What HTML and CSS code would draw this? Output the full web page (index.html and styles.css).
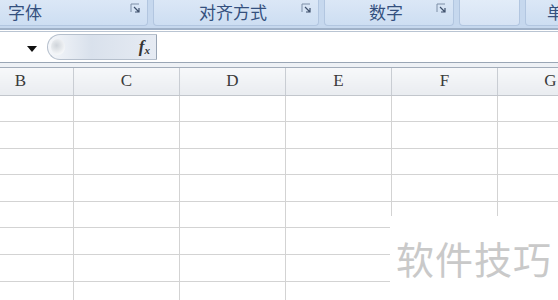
FILE: index.html
```html
<!DOCTYPE html>
<html lang="zh-CN">
<head>
    <meta charset="UTF-8">
    <meta name="viewport" content="width=device-width, initial-scale=1.0">
    <title>Excel</title>
    <link rel="stylesheet" href="styles.css">
</head>
<body>
    <div class="ribbon">
        <div class="group group-font">
            <span class="group-label">字体</span>
            <svg class="launcher" width="11" height="11" viewBox="0 0 11 11"><path d="M1 9V1h8" fill="none" stroke="#7d8ea6" stroke-width="1"/><path d="M4 4l5 5M9 5v4H5" fill="none" stroke="#3d4f6b" stroke-width="1.2"/></svg>
        </div>
        <div class="group group-align">
            <span class="group-label">对齐方式</span>
            <svg class="launcher" width="11" height="11" viewBox="0 0 11 11"><path d="M1 9V1h8" fill="none" stroke="#7d8ea6" stroke-width="1"/><path d="M4 4l5 5M9 5v4H5" fill="none" stroke="#3d4f6b" stroke-width="1.2"/></svg>
        </div>
        <div class="group group-number">
            <span class="group-label">数字</span>
            <svg class="launcher" width="11" height="11" viewBox="0 0 11 11"><path d="M1 9V1h8" fill="none" stroke="#7d8ea6" stroke-width="1"/><path d="M4 4l5 5M9 5v4H5" fill="none" stroke="#3d4f6b" stroke-width="1.2"/></svg>
        </div>
        <div class="group group-empty"></div>
        <div class="group group-cell">
            <span class="group-label">单</span>
        </div>
    </div>

    <div class="formula-bar">
        <div class="name-box">
            <svg width="10" height="6" viewBox="0 0 10 6"><path d="M0 0h10L5 6z" fill="#111"/></svg>
        </div>
        <div class="fx-button">
            <span class="knob"></span>
            <span class="fx">f<sub>x</sub></span>
        </div>
        <div class="formula-input"></div>
    </div>
    <div class="sheet-gap"></div>

    <table class="sheet">
        <colgroup>
            <col><col><col><col><col><col>
        </colgroup>
        <thead>
            <tr><th>B</th><th>C</th><th>D</th><th>E</th><th>F</th><th>G</th></tr>
        </thead>
        <tbody>
            <tr><td></td><td></td><td></td><td></td><td></td><td></td></tr>
            <tr><td></td><td></td><td></td><td></td><td></td><td></td></tr>
            <tr><td></td><td></td><td></td><td></td><td></td><td></td></tr>
            <tr><td></td><td></td><td></td><td></td><td></td><td></td></tr>
            <tr><td></td><td></td><td></td><td></td><td></td><td></td></tr>
            <tr><td></td><td></td><td></td><td></td><td></td><td></td></tr>
            <tr><td></td><td></td><td></td><td></td><td></td><td></td></tr>
            <tr><td></td><td></td><td></td><td></td><td></td><td></td></tr>
        </tbody>
    </table>

    <div class="watermark">软件技巧</div>
</body>
</html>
```

FILE: styles.css
```css
body {
    margin: 0;
    width: 558px;
    height: 300px;
    overflow: hidden;
    position: relative;
    background-color: #fff;
    font-family: "Noto Sans CJK SC", sans-serif;
}

/* ribbon group labels */
.ribbon {
    display: flex;
    gap: 5px;
    height: 30px;
    margin-left: -8px;
    background-color: #c6d8ee;
    border-bottom: 2px solid #9fb1c8;
    box-sizing: border-box;
}
.group {
    position: relative;
    height: 26px;
    background: linear-gradient(#dbe7f6, #cddef2);
    border: 1px solid #b2c6e0;
    border-top: none;
    border-radius: 0 0 4px 4px;
    box-sizing: border-box;
    flex-shrink: 0;
}
.group-label {
    display: block;
    font-size: 17px;
    line-height: 24px;
    color: #34507e;
}
.launcher {
    position: absolute;
    top: 3px;
    right: 6px;
}
.group-font {
    width: 156px;
    padding-left: 15px;
}
.group-align {
    width: 166px;
    text-align: center;
}
.group-align .group-label {
    padding-right: 6px;
}
.group-number {
    width: 130px;
    text-align: center;
}
.group-number .group-label {
    padding-right: 6px;
}
.group-empty {
    width: 61px;
    background: linear-gradient(#e2ecf8, #d6e3f4);
}
.group-cell {
    width: 60px;
    padding-left: 21px;
}

/* formula bar */
.formula-bar {
    display: flex;
    align-items: center;
    height: 32px;
    border-top: 1px solid #b9c4d2;
    border-bottom: 1px solid #9aa6b5;
    box-sizing: border-box;
    margin-top: 1px;
    background-color: #fff;
}
.name-box {
    width: 47px;
    display: flex;
    justify-content: flex-end;
    padding-right: 10px;
    box-sizing: border-box;
}
.name-box svg {
    margin-top: 3px;
}
.fx-button {
    position: relative;
    width: 110px;
    height: 26px;
    border: 1px solid #b5bfcc;
    border-right: 1px solid #98a4b4;
    border-radius: 14px 0 0 14px;
    background: linear-gradient(to right, #f5f7fa, #d9e1ec 40%, #e6ebf3);
    box-sizing: border-box;
    display: flex;
    align-items: center;
    justify-content: flex-end;
    padding-right: 6px;
}
.knob {
    position: absolute;
    left: 3px;
    top: 4px;
    width: 14px;
    height: 16px;
    border-radius: 50%;
    background: radial-gradient(circle at 40% 40%, #cfd4da, #f4f6f8 70%);
}
.fx {
    font-family: "Liberation Serif", serif;
    font-style: italic;
    font-weight: bold;
    font-size: 17px;
    color: #333;
    line-height: 1;
}
.fx sub {
    font-size: 11px;
    vertical-align: -2px;
}
.formula-input {
    flex: 1;
    height: 30px;
}
.sheet-gap {
    height: 4px;
    background-color: #eef1f5;
    border-bottom: 1px solid #a3adba;
}

/* grid */
.sheet {
    border-collapse: collapse;
    table-layout: fixed;
    width: 637px;
    margin-left: -33px;
}
.sheet col {
    width: 106px;
}
.sheet th {
    height: 27px;
    padding: 0;
    font-family: "Liberation Serif", serif;
    font-weight: normal;
    font-size: 17px;
    color: #3a3a3a;
    background: linear-gradient(#f7f8fa, #e9ecf0);
    border-left: 1px solid #c9cdd3;
    border-right: 1px solid #c9cdd3;
    border-bottom: 1px solid #c2c6cc;
    box-sizing: border-box;
}
.sheet td {
    height: 25.6px;
    padding: 0;
    border: 1px solid #d3d3d3;
}

/* watermark box over the sheet */
.watermark {
    position: absolute;
    left: 390px;
    top: 216px;
    width: 168px;
    height: 84px;
    background-color: #fff;
    color: #c9c9c9;
    font-size: 38px;
    line-height: 84px;
    padding-left: 6px;
    box-sizing: border-box;
    letter-spacing: 1px;
    white-space: nowrap;
}
```
